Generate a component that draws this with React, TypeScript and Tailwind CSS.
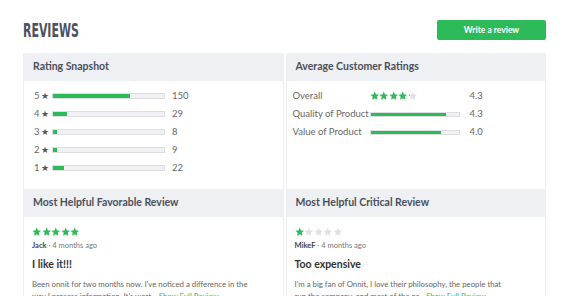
import React from "react";

const GREEN = "#2dbb5a";
const STAR_D =
  "M12 1.5l3.1 7.1 7.7.7-5.8 5.1 1.7 7.6L12 18l-6.7 4 1.7-7.6-5.8-5.1 7.7-.7z";

function Star({ fill, size = 10 }: { fill: number; size?: number }) {
  return (
    <div className="relative" style={{ width: size, height: size }}>
      <svg width={size} height={size} viewBox="0 0 24 24" className="block">
        <path fill="#dfe1e5" d={STAR_D} />
      </svg>
      {fill > 0 && (
        <div className="absolute inset-y-0 left-0 overflow-hidden" style={{ width: `${fill * 100}%` }}>
          <svg width={size} height={size} viewBox="0 0 24 24" className="block">
            <path fill={GREEN} d={STAR_D} />
          </svg>
        </div>
      )}
    </div>
  );
}

function Stars({ value, size = 10 }: { value: number; size?: number }) {
  return (
    <div className="flex">
      {[0, 1, 2, 3, 4].map((i) => (
        <Star key={i} size={size} fill={Math.max(0, Math.min(1, value - i))} />
      ))}
    </div>
  );
}

const snapshot = [
  { star: 5, count: 150, pct: 69 },
  { star: 4, count: 29, pct: 13 },
  { star: 3, count: 8, pct: 4 },
  { star: 2, count: 9, pct: 4 },
  { star: 1, count: 22, pct: 10 },
];

function PanelHeader({ children }: { children: React.ReactNode }) {
  return (
    <div className="h-[28px] bg-[#eef0f4] flex items-center px-[9px] text-[10.5px] font-bold text-[#4a4f59]">
      {children}
    </div>
  );
}

function Bar({ pct, h = 6 }: { pct: number; h?: number }) {
  return (
    <div className="bg-[#f0f1f3] border border-[#dcdee2] w-full" style={{ height: h }}>
      <div className="h-full bg-[#2dbb5a]" style={{ width: `${pct}%` }} />
    </div>
  );
}

function ReviewCard({
  title,
  stars,
  author,
  headline,
  body,
}: {
  title: string;
  stars: number;
  author: string;
  headline: string;
  body: string;
}) {
  return (
    <div className="border-x border-[#eceef1]">
      <PanelHeader>{title}</PanelHeader>
      <div className="px-[8px] pt-[10px]">
        <Stars value={stars} size={9.5} />
        <div className="mt-[3px] text-[7.5px] text-[#777] leading-[12px]">
          <span className="font-bold text-[#444]">{author}</span> · 4 months ago
        </div>
        <div className="mt-[5px] text-[10.5px] font-bold text-[#333] leading-[14px]">
          {headline}
        </div>
        <p className="mt-[7px] text-[7.8px] text-[#666] leading-[12.5px] w-[218px]">
          {body} <span className="text-[#2dbb5a]">Show Full Review</span>
        </p>
      </div>
    </div>
  );
}

export default function App() {
  return (
    <div
      className="w-[569px] h-[296px] overflow-hidden bg-white px-[23px] pt-[20px]"
      style={{ fontFamily: "Lato, 'Open Sans', sans-serif" }}
    >
      <div className="flex items-center justify-between h-[20px]">
        <h1
          className="text-[19px] leading-none font-bold text-[#4c5260] origin-left scale-x-[0.64]"
          style={{ fontFamily: "'DejaVu Sans Condensed', 'DejaVu Sans', sans-serif" }}
        >
          REVIEWS
        </h1>
        <button className="h-[20px] w-[109px] rounded-[2px] bg-[#2dbb5a] text-white text-[8.5px] font-bold">
          Write a review
        </button>
      </div>

      <div className="mt-[13px] grid grid-cols-2 gap-x-[2px]">
        <div className="h-[136px] border-x border-[#eceef1]">
          <PanelHeader>Rating Snapshot</PanelHeader>
          <div className="pt-[6px] pl-[10px]">
            {snapshot.map((r) => (
              <div key={r.star} className="h-[18px] flex items-center text-[9.5px] text-[#666]">
                <span className="w-[18px] flex items-center gap-[1px]">
                  {r.star}
                  <span className="text-[8.5px] text-[#555]">★</span>
                </span>
                <div className="w-[113px]">
                  <Bar pct={r.pct} />
                </div>
                <span className="ml-[7px]">{r.count}</span>
              </div>
            ))}
          </div>
        </div>

        <div className="h-[136px] border-x border-[#eceef1]">
          <PanelHeader>Average Customer Ratings</PanelHeader>
          <div className="pt-[6px] pl-[6px] text-[9.5px] text-[#666]">
            <div className="h-[18px] flex items-center">
              <span className="w-[77px]">Overall</span>
              <div className="w-[100px]">
                <Stars value={4.3} size={9.5} />
              </div>
              <span>4.3</span>
            </div>
            <div className="h-[18px] flex items-center">
              <span className="w-[77px]">Quality of Product</span>
              <div className="w-[90px] mr-[10px]">
                <Bar pct={86} h={5} />
              </div>
              <span>4.3</span>
            </div>
            <div className="h-[18px] flex items-center">
              <span className="w-[77px]">Value of Product</span>
              <div className="w-[90px] mr-[10px]">
                <Bar pct={80} h={5} />
              </div>
              <span>4.0</span>
            </div>
          </div>
        </div>

        <ReviewCard
          title="Most Helpful Favorable Review"
          stars={5}
          author="Jack"
          headline="I like it!!!"
          body="Been onnit for two months now. I've noticed a difference in the way I process information. It's wort..."
        />
        <ReviewCard
          title="Most Helpful Critical Review"
          stars={1}
          author="MikeF"
          headline="Too expensive"
          body="I'm a big fan of Onnit, I love their philosophy, the people that run the company, and most of the pr..."
        />
      </div>
    </div>
  );
}
